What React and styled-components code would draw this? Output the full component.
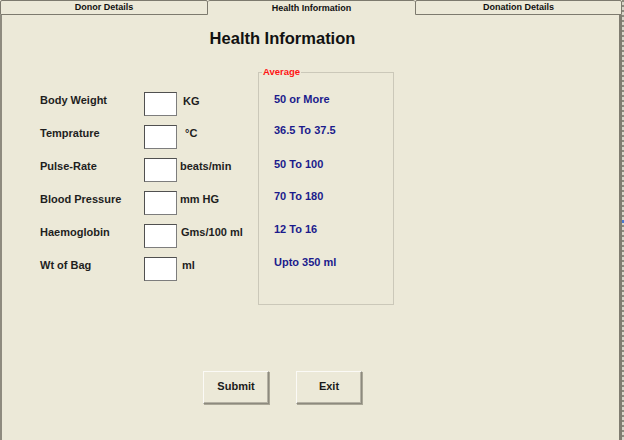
import React from "react";
import styled, { createGlobalStyle } from "styled-components";

const GlobalStyle = createGlobalStyle`
  html, body {
    margin: 0;
    padding: 0;
    background: #ece9d8;
  }
  body {
    font-family: "Liberation Sans", Arial, sans-serif;
  }
`;

const Frame = styled.div`
  width: 624px;
  height: 440px;
  display: flex;
  overflow: hidden;
  background: #ece9d8;
`;

const Window = styled.div`
  width: 622px;
  display: flex;
  flex-direction: column;
`;

const Stripe = styled.div`
  width: 2px;
  background:
    linear-gradient(#4a78d0, #4a78d0) 0 220px / 2px 3px no-repeat,
    repeating-linear-gradient(to bottom, #8e8b7f 0 2px, #d9d6c9 2px 5px);
`;

const TabBar = styled.div`
  display: flex;
  height: 15px;
`;

const Tab = styled.div`
  box-sizing: border-box;
  width: ${(p) => p.$w}px;
  height: 15px;
  border-top: 1px solid #7d7a6e;
  border-left: ${(p) => (p.$active ? "none" : "1px solid #7d7a6e")};
  border-right: ${(p) => (p.$active ? "none" : "1px solid #7d7a6e")};
  border-bottom: ${(p) => (p.$active ? "none" : "1px solid #7d7a6e")};
  border-radius: 2px 2px 0 0;
  padding-top: ${(p) => (p.$active ? 2 : 1)}px;
  font-size: 9px;
  font-weight: bold;
  line-height: 11px;
  text-align: center;
  color: #111;
  background: #ece9d8;
`;

const Panel = styled.div`
  flex: 1;
  border-left: 2px solid #8e8b7f;
  border-right: 3px solid #7f7c70;
  display: flex;
`;

const Content = styled.div`
  width: 561px;
  display: flex;
  flex-direction: column;
`;

const Title = styled.h1`
  margin: 13px 0 0;
  font-size: 16.5px;
  line-height: 20px;
  font-weight: bold;
  text-align: center;
  color: #111;
`;

const Body = styled.div`
  display: flex;
  align-items: flex-start;
  margin-top: 24px;
`;

const Form = styled.div`
  box-sizing: border-box;
  width: 256px;
  margin-top: 20px;
  padding-left: 38px;
  display: grid;
  grid-template-columns: 104px 33px 1fr;
  grid-auto-rows: 33px;
  align-items: start;
`;

const Label = styled.div`
  font-size: 11px;
  font-weight: bold;
  line-height: 14px;
  padding-top: 1px;
  color: #1e1e1e;
  white-space: nowrap;
`;

const Field = styled.input`
  box-sizing: border-box;
  width: 33px;
  height: 24px;
  margin: 0;
  background: #fff;
  border: 1px solid;
  border-color: #505050 #7d7d7d #7d7d7d #505050;
`;

const Unit = styled.div`
  font-size: 11px;
  font-weight: bold;
  line-height: 14px;
  padding-top: ${(p) => p.$top}px;
  padding-left: ${(p) => p.$indent}px;
  color: #1e1e1e;
  white-space: nowrap;
`;

const GroupBox = styled.div`
  position: relative;
  box-sizing: border-box;
  width: 136px;
  height: 233px;
  border: 1px solid #cbc8b9;
  padding: 19px 0 0 15px;
`;

const Legend = styled.span`
  position: absolute;
  top: -7px;
  left: 3px;
  padding: 0 1px;
  background: #ece9d8;
  color: #ff1414;
  font-size: 9.5px;
  font-weight: bold;
  line-height: 11px;
`;

const Value = styled.div`
  height: ${(p) => p.$h}px;
  font-size: 11px;
  font-weight: bold;
  line-height: 14px;
  color: #1b1b8c;
  white-space: nowrap;
`;

const Actions = styled.div`
  display: flex;
  justify-content: center;
  gap: 27px;
  margin-top: 66px;
`;

const Button = styled.button`
  box-sizing: border-box;
  width: 66px;
  height: 33px;
  padding: 0 0 3px;
  background: #ece9d8;
  border: 1px solid;
  border-color: #fbfaf6 #8d8a7e #8d8a7e #fbfaf6;
  box-shadow: inset -1px -1px 0 #b5b2a4, 1px 1px 0 #aaa797;
  font-family: "Liberation Sans", Arial, sans-serif;
  font-size: 11px;
  font-weight: bold;
  color: #1a1a1a;
`;

const fields = [
  { label: "Body Weight", unit: "KG", indent: 6, top: 2 },
  { label: "Temprature", unit: "°C", indent: 8, top: 1 },
  { label: "Pulse-Rate", unit: "beats/min", indent: 3, top: 1 },
  { label: "Blood Pressure", unit: "mm HG", indent: 3, top: 1 },
  { label: "Haemoglobin", unit: "Gms/100 ml", indent: 4, top: 1 },
  { label: "Wt of Bag", unit: "ml", indent: 5, top: 1 },
];

const averages = [
  { text: "50 or More", h: 31 },
  { text: "36.5 To 37.5", h: 34 },
  { text: "50 To 100", h: 32 },
  { text: "70 To 180", h: 33 },
  { text: "12 To 16", h: 33 },
  { text: "Upto 350 ml", h: 14 },
];

const App = () => {
  return (
    <>
      <GlobalStyle />
      <Frame>
        <Window>
          <TabBar>
            <Tab $w={208}>Donor Details</Tab>
            <Tab $w={207} $active>
              Health Information
            </Tab>
            <Tab $w={207}>Donation Details</Tab>
          </TabBar>
          <Panel>
            <Content>
              <Title>Health Information</Title>
              <Body>
                <Form>
                  {fields.map((f) => (
                    <React.Fragment key={f.label}>
                      <Label>{f.label}</Label>
                      <Field type="text" />
                      <Unit $indent={f.indent} $top={f.top}>
                        {f.unit}
                      </Unit>
                    </React.Fragment>
                  ))}
                </Form>
                <GroupBox>
                  <Legend>Average</Legend>
                  {averages.map((a) => (
                    <Value key={a.text} $h={a.h}>
                      {a.text}
                    </Value>
                  ))}
                </GroupBox>
              </Body>
              <Actions>
                <Button>Submit</Button>
                <Button>Exit</Button>
              </Actions>
            </Content>
          </Panel>
        </Window>
        <Stripe />
      </Frame>
    </>
  );
};

export default App;
